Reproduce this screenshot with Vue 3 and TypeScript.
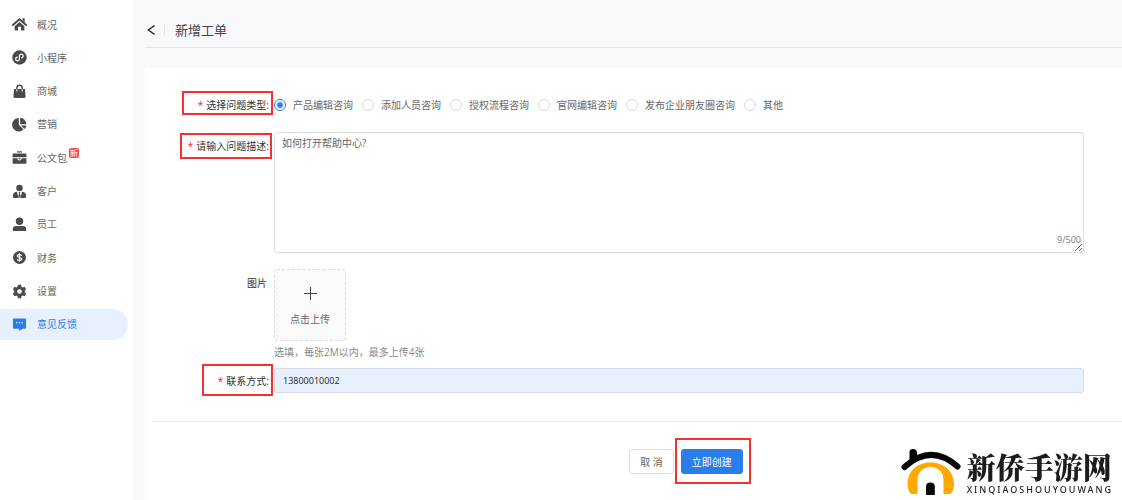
<script setup lang="ts">
import { ref, computed } from 'vue'

interface NavItem {
  icon: string
  label: string
  badge?: string
}

const navItems: NavItem[] = [
  { icon: 'home', label: '概况' },
  { icon: 'mini', label: '小程序' },
  { icon: 'bag', label: '商城' },
  { icon: 'pie', label: '营销' },
  { icon: 'case', label: '公文包', badge: '新' },
  { icon: 'client', label: '客户' },
  { icon: 'staff', label: '员工' },
  { icon: 'money', label: '财务' },
  { icon: 'gear', label: '设置' },
  { icon: 'chat', label: '意见反馈' },
]
const active = ref('意见反馈')

const types = ['产品编辑咨询', '添加人员咨询', '授权流程咨询', '官网编辑咨询', '发布企业朋友圈咨询', '其他']
const selectedType = ref(types[0])
const description = ref('如何打开帮助中心?')
const phone = ref('13800010002')
const counter = computed(() => `${description.value.length}/500`)
</script>

<template>
  <div class="page">
    <nav class="sidebar">
      <ul class="nav-list">
        <li v-for="item in navItems" :key="item.label">
          <a href="#" class="nav-item" :class="{ active: item.label === active }" @click.prevent="active = item.label">
            <svg class="nav-icon" viewBox="0 0 16 16" aria-hidden="true">
              <g v-if="item.icon === 'home'">
                <path d="M1 8.600 8 2.400l7 6.200" fill="none" stroke="currentColor" stroke-width="2" stroke-linecap="round" stroke-linejoin="round" />
                <path d="M11.300 1.400h2.200v4.600l-2.200-2z" />
                <path d="M8 5.400l5.200 4.400v4a.7.700 0 0 1-.7.700H9.600v-4H6.400v4H3.500a.7.700 0 0 1-.7-.7v-4z" />
              </g>
              <g v-else-if="item.icon === 'mini'">
                <circle cx="8" cy="8" r="7.700" />
                <path d="M5.600 7.700a2 2 0 1 0 2.300 2V6.300a2 2 0 1 1 2.400 2" fill="none" stroke="#fff" stroke-width="1.300" stroke-linecap="round" />
              </g>
              <g v-else-if="item.icon === 'bag'">
                <path d="M2.200 5.200h11.600l.7 8.100a1.400 1.400 0 0 1-1.400 1.500H2.900a1.400 1.400 0 0 1-1.400-1.500z" />
                <path d="M5.200 6V4.100a2.800 2.800 0 0 1 5.600 0V6" fill="none" stroke="currentColor" stroke-width="1.500" />
                <path d="M5.200 6v1.400M10.800 6v1.400" stroke="#fff" stroke-width="1.100" stroke-linecap="round" />
              </g>
              <g v-else-if="item.icon === 'pie'">
                <path d="M7.300 1v7.200l5 5.200A7.200 7.200 0 1 1 7.300 1z" />
                <path d="M8.700.9a6.800 6.800 0 0 1 6.500 6.800H8.700z" />
                <path d="M9.500 9h5.700a6.400 6.400 0 0 1-1.900 3.800z" />
              </g>
              <g v-else-if="item.icon === 'case'">
                <path d="M5.400 1.400h5.200v1.300H5.400z" />
                <path d="M1.600 3.800h12.800a1 1 0 0 1 1 1v2.900H.6V4.800a1 1 0 0 1 1-1z" />
                <path d="M.6 8.700h14.800v4.900a1 1 0 0 1-1 1H1.600a1 1 0 0 1-1-1z" />
                <path d="M6.200 8v.9a1.800 1.800 0 0 0 3.600 0V8" fill="none" stroke="#fff" stroke-width="1.100" />
              </g>
              <g v-else-if="item.icon === 'client'">
                <circle cx="8" cy="4.200" r="3.500" />
                <path d="M5.200 8.200 7.100 14.800H2.300A1.300 1.300 0 0 1 1 13.500v-1.300a4 4 0 0 1 4.200-4zM10.800 8.200 8.900 14.800h4.800a1.300 1.300 0 0 0 1.300-1.300v-1.300a4 4 0 0 0-4.200-4z" />
                <path d="M7 8.400h2l-.5 1.400.7 3.400L8 14.800l-1.200-1.600.7-3.400z" />
              </g>
              <g v-else-if="item.icon === 'staff'">
                <circle cx="8" cy="4.500" r="4" />
                <path d="M4.600 9.500h6.800A3.700 3.700 0 0 1 15.200 13v.8a1 1 0 0 1-1 1H1.800a1 1 0 0 1-1-1V13a3.700 3.700 0 0 1 3.800-3.500z" />
              </g>
              <g v-else-if="item.icon === 'money'">
                <circle cx="8" cy="8" r="6.900" />
                <path d="M10.300 6.200C10 5.200 9.200 4.800 8 4.800c-1.300 0-2.300.6-2.300 1.600 0 2.300 4.600.9 4.600 3.200 0 1-1 1.600-2.300 1.600s-2.200-.5-2.400-1.500M8 3.500v9" fill="none" stroke="#fff" stroke-width="1.300" />
              </g>
              <g v-else-if="item.icon === 'gear'">
                <path fill-rule="evenodd" d="M6.300.9h3.400l.4 2 1.300.8 2-.7 1.700 2.900-1.600 1.300v1.600l1.600 1.300-1.700 2.900-2-.7-1.300.8-.4 2H6.300l-.4-2-1.300-.8-2 .7L.9 10.100l1.600-1.300V7.200L.9 5.900 2.600 3l2 .7 1.300-.8zM8 5.500a2.500 2.500 0 1 0 0 5 2.500 2.500 0 0 0 0-5z" />
              </g>
              <g v-else>
                <path d="M1.900 1.600h12.200a.9.900 0 0 1 .9.900v9a.9.900 0 0 1-.9.900h-2.700L7.600 15v-2.600H1.900a.9.900 0 0 1-.9-.9v-9a.9.900 0 0 1 .9-.9z" />
                <path d="M4.400 6.100h1.600M7.200 6.100h1.600M10 6.100h1.600" stroke="#fff" stroke-width="1" />
              </g>
            </svg>
            <span>{{ item.label }}</span>
            <span v-if="item.badge" class="badge">{{ item.badge }}</span>
          </a>
        </li>
      </ul>
    </nav>

    <main class="main">
      <header class="page-head">
        <button type="button" class="back" aria-label="返回">
          <svg viewBox="0 0 10 12" aria-hidden="true"><path d="M8.500 1 1.500 6l7 5" /></svg>
        </button>
        <h1>新增工单</h1>
      </header>

      <form class="card" @submit.prevent>
        <div class="row row-type" role="radiogroup" aria-labelledby="type-label">
          <span id="type-label" class="label marked mark-type"><i>*</i>选择问题类型:</span>
          <div class="radios">
            <label v-for="t in types" :key="t" class="radio">
              <input v-model="selectedType" type="radio" name="type" :value="t" />
              <span>{{ t }}</span>
            </label>
          </div>
        </div>

        <div class="row row-desc">
          <label for="desc" class="label marked mark-desc"><i>*</i>请输入问题描述:</label>
          <div class="area">
            <textarea id="desc" v-model="description" maxlength="500" spellcheck="false"></textarea>
            <span class="count">{{ counter }}</span>
          </div>
        </div>

        <div class="row row-image">
          <span class="label label-image">图片</span>
          <div>
            <button type="button" class="upload">
              <svg viewBox="0 0 14 14" aria-hidden="true"><path d="M7 0v14M0 7h14" /></svg>
              <span>点击上传</span>
            </button>
            <p class="hint">选填，每张2M以内，最多上传4张</p>
          </div>
        </div>

        <div class="row row-phone">
          <label for="phone" class="label marked mark-phone"><i>*</i>联系方式:</label>
          <input id="phone" v-model="phone" class="text-input" type="text" />
        </div>

        <footer class="actions">
          <button type="button" class="btn">取 消</button>
          <span class="marked mark-submit">
            <button type="submit" class="btn primary">立即创建</button>
          </span>
        </footer>
      </form>
    </main>

    <div class="brand">
      <svg viewBox="0 0 60 48" aria-hidden="true">
        <path d="M11 45C8 45 6.500 39 6.500 34.500 7 21 17 13.500 29.500 13.500S52.500 21 53 34.500C53 39 52 45 48 45h-5.500V31C42.500 23 37 18 29.500 18s-13 5-13 13v14z" fill="#ffa800" />
        <path d="M3.500 18Q30-6 56.500 17.500" fill="none" stroke="#050505" stroke-width="6" stroke-linecap="round" />
        <path d="M8.500 13V3q0-3 3.500-3t4 3v6z" fill="#050505" />
        <path d="M25 46v-8.500q0-4 4.400-4t4.400 4V46z" fill="#050505" />
      </svg>
      <div class="brand-text">
        <strong>新侨手游网</strong>
        <span>XINQIAOSHOUYOUWANG</span>
      </div>
    </div>
  </div>
</template>

<style>
body {
  background: #f8f9fb;
}
</style>

<style scoped>
.page {
  display: flex;
  min-height: 100vh;
  font-family: "Open Sans", "Noto Sans CJK SC", sans-serif;
  font-size: 10px;
  line-height: 16px;
  color: #666;
}
.page * {
  box-sizing: border-box;
}
button,
input,
textarea {
  font: inherit;
  color: inherit;
}
.sidebar {
  flex: 0 0 133px;
  padding-top: 9px;
  background: #fff;
}
.nav-list {
  display: flex;
  flex-direction: column;
  justify-content: space-between;
  height: 331px;
  margin: 0;
  padding: 0;
  list-style: none;
}
.nav-item {
  display: flex;
  align-items: center;
  height: 31px;
  margin-right: 5px;
  padding-left: 12px;
  border-radius: 0 16px 16px 0;
  color: #666;
  text-decoration: none;
}
.nav-icon {
  width: 15px;
  height: 15px;
  margin-right: 10px;
  fill: currentColor;
  color: #4a4a4a;
}
.nav-item.active {
  background: #e6f0ff;
  color: #2b7de9;
}
.nav-item.active .nav-icon {
  color: #2b7de9;
}
.badge {
  margin: 0 0 10px 2px;
  width: 10px;
  border-radius: 2px;
  background: #f5484d;
  color: #fff;
  font-size: 8px;
  line-height: 10px;
  text-align: center;
}
.main {
  flex: 1;
  min-width: 0;
  display: flex;
  flex-direction: column;
  padding-left: 12px;
}
.page-head {
  display: flex;
  align-items: center;
  height: 48px;
  padding-top: 12px;
  border-bottom: 1px solid #e3e5e8;
}
.back {
  display: flex;
  padding: 0 8px 0 2px;
  border: 0;
  border-right: 1px solid #e3e5e8;
  background: none;
}
.back svg {
  width: 9px;
  height: 12px;
  fill: none;
  stroke: #222;
  stroke-width: 1.500;
}
h1 {
  margin: 0 0 0 10px;
  font-size: 13px;
  font-weight: 400;
  line-height: 20px;
  color: #444;
}
.card {
  flex: 1;
  margin-top: 20px;
  padding-top: 29px;
  background: #fff;
}
.row {
  display: grid;
  grid-template-columns: 129px minmax(0, 1fr);
  align-items: start;
  padding-right: 38px;
}
.label {
  position: relative;
  justify-self: end;
  margin-right: 5px;
  color: #333;
}
.label-image {
  margin-right: 7px;
}
.label i {
  margin-right: 3px;
  color: #f5222d;
  font-style: normal;
}
.marked::after {
  content: "";
  position: absolute;
  border: 2px solid #f5302f;
  pointer-events: none;
}
.mark-type::after {
  inset: -6px -4px -2px -16px;
}
.mark-desc::after {
  inset: -5px -3px -5px -8px;
}
.mark-phone::after {
  inset: -9px -4px -7px -16px;
}
.radios {
  display: flex;
  gap: 9px;
}
.radio {
  display: flex;
  align-items: center;
  gap: 7px;
}
.radio input {
  appearance: none;
  width: 12px;
  height: 12px;
  margin: 0;
  border: 1px solid #d9d9d9;
  border-radius: 50%;
  background: #fff;
}
.radio input:checked {
  border-color: #2b7de9;
  background: radial-gradient(circle, #2b7de9 0 2px, #fff 4px);
}
.row-desc {
  margin-top: 19px;
}
.row-desc .label {
  margin-top: 6px;
}
.area {
  position: relative;
}
textarea {
  display: block;
  width: 100%;
  height: 121px;
  padding: 2px 7px;
  border: 1px solid #dedede;
  border-radius: 3px;
  background: #fff;
  outline: none;
  resize: vertical;
}
.count {
  position: absolute;
  right: 3px;
  bottom: 5px;
  font-size: 9px;
  color: #777;
}
.row-image {
  margin-top: 16px;
}
.row-image .label {
  margin-top: 6px;
}
.upload {
  display: flex;
  flex-direction: column;
  align-items: center;
  justify-content: center;
  gap: 11px;
  width: 72px;
  height: 72px;
  padding: 4px 0 0;
  border: 1px dashed #dedede;
  border-radius: 3px;
  background: #fafafa;
}
.upload svg {
  width: 13px;
  height: 13px;
  stroke: #333;
}
.hint {
  margin: 3px 0 0;
  color: #888;
}
.row-phone {
  align-items: center;
  margin-top: 8px;
}
.text-input {
  width: 100%;
  height: 25px;
  padding: 0 8px;
  border: 1px solid #d5dce8;
  border-radius: 3px;
  background: #e8f0fe;
  font-size: 9px;
  color: #222;
  outline: none;
}
.actions {
  display: flex;
  justify-content: center;
  gap: 7px;
  margin: 28px 0 0 7px;
  padding: 27px 0 26px 98px;
  border-top: 1px solid #ebebeb;
}
.btn {
  height: 25px;
  padding: 0 10px;
  border: 1px solid #dedede;
  border-radius: 3px;
  background: #fff;
}
.btn.primary {
  border-color: #2b7de9;
  background: #2b7de9;
  color: #fff;
}
.mark-submit {
  position: relative;
}
.mark-submit::after {
  inset: -11px -8px -10px -6px;
}
.brand {
  position: fixed;
  right: 9px;
  bottom: 3px;
  display: flex;
  align-items: center;
  gap: 6px;
}
.brand svg {
  width: 60px;
  height: 48px;
}
.brand-text {
  display: flex;
  flex-direction: column;
  color: #1c1c1c;
}
.brand-text strong {
  font-family: "Noto Serif CJK SC", "Noto Sans CJK SC", serif;
  font-size: 29px;
  font-weight: 900;
  line-height: 34px;
}
.brand-text span {
  font-family: "Noto Sans", sans-serif;
  font-size: 9px;
  font-weight: 500;
  line-height: 12px;
  letter-spacing: 2px;
}
</style>
